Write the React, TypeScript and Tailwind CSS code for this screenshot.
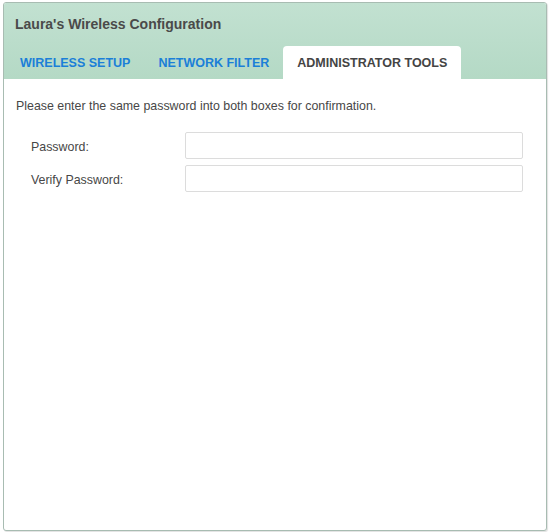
import React from "react";

export default function App() {
  return (
    <div className="w-[550px] h-[532px] bg-white" style={{ fontFamily: '"Liberation Sans", Arial, sans-serif' }}>
      <div className="absolute left-[3px] top-[2px] w-[544px] h-[529px] border border-[#a8bcb2] rounded-[3px] bg-white overflow-hidden flex flex-col shadow-[1px_1px_1px_rgba(0,0,0,0.12)]">
        <div className="h-[76px] bg-gradient-to-b from-[#c2e1d1] to-[#b4d9c5] flex flex-col">
          <div className="pl-[11px] pt-[13px] h-[43px] text-[14px] leading-[17px] font-bold text-[#4a4a4a]">
            Laura's Wireless Configuration
          </div>
          <div className="flex pl-[2px] h-[33px]">
            <div className="px-[14px] pt-[1px] flex items-center text-[12.5px] font-bold text-[#1b7fd8]">WIRELESS SETUP</div>
            <div className="px-[14px] pt-[1px] flex items-center text-[12.5px] font-bold text-[#1b7fd8]">NETWORK FILTER</div>
            <div className="px-[14px] pt-[1px] flex items-center text-[12.5px] font-bold text-[#444] bg-white rounded-t-[4px]">ADMINISTRATOR TOOLS</div>
          </div>
        </div>
        <div className="pl-[12px] pr-[23px] pt-[20px]">
          <p className="text-[12.4px] leading-[15px] text-[#474747]">
            Please enter the same password into both boxes for confirmation.
          </p>
          <div className="mt-[18px] flex flex-col gap-[6px]">
            <div className="flex items-center">
              <label className="w-[169px] shrink-0 pl-[15px] pt-[3px] text-[12.4px] text-[#474747]">Password:</label>
              <input type="password" className="flex-1 min-w-0 h-[27px] border border-[#dcdcdc] rounded-[2px] outline-none" />
            </div>
            <div className="flex items-center">
              <label className="w-[169px] shrink-0 pl-[15px] pt-[3px] text-[12.4px] text-[#474747]">Verify Password:</label>
              <input type="password" className="flex-1 min-w-0 h-[27px] border border-[#dcdcdc] rounded-[2px] outline-none" />
            </div>
          </div>
        </div>
      </div>
    </div>
  );
}
